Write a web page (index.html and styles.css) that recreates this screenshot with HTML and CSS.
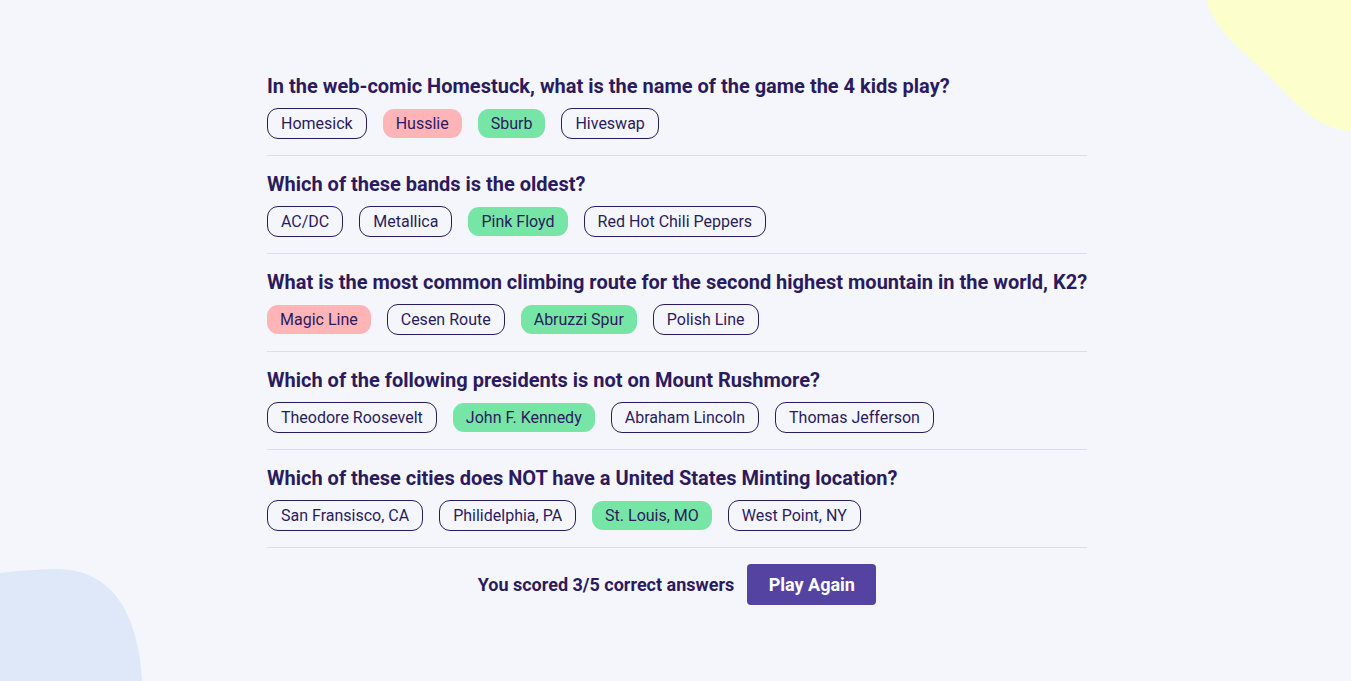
FILE: index.html
```html
<!DOCTYPE html>
<html lang="en">
<head>
<meta charset="utf-8">
<title>Quizzical</title>
<link rel="stylesheet" href="styles.css">
</head>
<body>
<svg class="blobs" width="1351" height="681" viewBox="0 0 1351 681" aria-hidden="true">
  <path fill="#fcffcc" d="M1207,0 C1212,25 1235,45 1260,67 C1290,95 1310,128 1351,131 L1351,0 Z"/>
  <path fill="#dee8f8" d="M0,573 C25,570 45,569 58,569 C110,570 138,610 142,681 L0,681 Z"/>
</svg>
<main class="page">
  <section class="quiz">
    <div class="question">
      <h2 class="q-title">In the web-comic Homestuck, what is the name of the game the 4 kids play?</h2>
      <div class="answers">
        <span class="answer">Homesick</span>
        <span class="answer wrong">Husslie</span>
        <span class="answer correct">Sburb</span>
        <span class="answer">Hiveswap</span>
      </div>
    </div>
    <div class="question">
      <h2 class="q-title">Which of these bands is the oldest?</h2>
      <div class="answers">
        <span class="answer">AC/DC</span>
        <span class="answer">Metallica</span>
        <span class="answer correct">Pink Floyd</span>
        <span class="answer">Red Hot Chili Peppers</span>
      </div>
    </div>
    <div class="question">
      <h2 class="q-title">What is the most common climbing route for the second highest mountain in the world, K2?</h2>
      <div class="answers">
        <span class="answer wrong">Magic Line</span>
        <span class="answer">Cesen Route</span>
        <span class="answer correct">Abruzzi Spur</span>
        <span class="answer">Polish Line</span>
      </div>
    </div>
    <div class="question">
      <h2 class="q-title">Which of the following presidents is not on Mount Rushmore?</h2>
      <div class="answers">
        <span class="answer">Theodore Roosevelt</span>
        <span class="answer correct">John F. Kennedy</span>
        <span class="answer">Abraham Lincoln</span>
        <span class="answer">Thomas Jefferson</span>
      </div>
    </div>
    <div class="question">
      <h2 class="q-title">Which of these cities does NOT have a United States Minting location?</h2>
      <div class="answers">
        <span class="answer">San Fransisco, CA</span>
        <span class="answer">Philidelphia, PA</span>
        <span class="answer correct">St. Louis, MO</span>
        <span class="answer">West Point, NY</span>
      </div>
    </div>
    <div class="result">
      <p class="score">You scored 3/5 correct answers</p>
      <button class="play-btn">Play Again</button>
    </div>
  </section>
</main>
</body>
</html>
```

FILE: styles.css
```css
* { box-sizing: border-box; }

html, body {
  margin: 0;
  padding: 0;
  height: 100%;
}

body {
  background: #f5f6fb;
  font-family: Roboto, "Liberation Sans", sans-serif;
  color: #2b1b5e;
  overflow: hidden;
  position: relative;
}

.blobs {
  position: absolute;
  top: 0;
  left: 0;
  z-index: 0;
  display: block;
}

.page {
  position: relative;
  z-index: 1;
  display: flex;
  justify-content: center;
  padding-left: 3px;
  padding-top: 74px;
}

.quiz {
  width: 820px;
}

.question {
  padding-bottom: 16px;
  margin-bottom: 16px;
  border-bottom: 1px solid #dbdbf3;
}

.q-title {
  margin: 0;
  font-size: 20px;
  line-height: 24px;
  font-weight: 700;
  color: #2b1b5e;
  white-space: nowrap;
}

.answers {
  display: flex;
  align-items: center;
  gap: 16px;
  margin-top: 10px;
  height: 31px;
}

.answer {
  display: inline-block;
  font-size: 16px;
  line-height: 19px;
  padding: 5px 13px;
  border: 1px solid #2b1b5e;
  border-radius: 11px;
  color: #2b1b5e;
}

.answer.wrong {
  background: #ffb5b8;
  border: none;
}

.answer.correct {
  background: #77e5a6;
  border: none;
}

.result {
  display: flex;
  justify-content: center;
  align-items: center;
  gap: 13px;
}

.score {
  margin: 0;
  font-size: 18px;
  font-weight: 700;
  color: #2b1b5e;
}

.play-btn {
  font-family: inherit;
  font-size: 18px;
  font-weight: 700;
  color: #fff;
  background: #5443a0;
  border: none;
  border-radius: 4px;
  width: 129px;
  height: 41px;
  padding: 0;
}
```
